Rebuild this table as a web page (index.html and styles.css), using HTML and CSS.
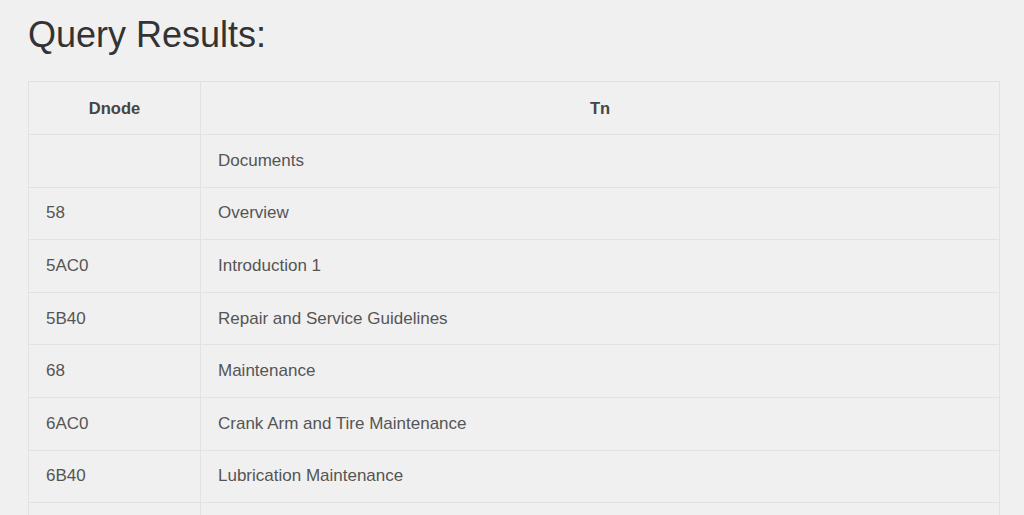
FILE: index.html
```html
<!DOCTYPE html>
<html>
<head>
<meta charset="utf-8">
<link rel="stylesheet" href="styles.css">
</head>
<body>
<div class="page">
  <h1 class="title">Query Results:</h1>
  <table class="results">
    <thead>
      <tr><th class="c1">Dnode</th><th>Tn</th></tr>
    </thead>
    <tbody>
      <tr><td></td><td>Documents</td></tr>
      <tr><td>58</td><td>Overview</td></tr>
      <tr><td>5AC0</td><td>Introduction 1</td></tr>
      <tr><td>5B40</td><td>Repair and Service Guidelines</td></tr>
      <tr><td>68</td><td>Maintenance</td></tr>
      <tr><td>6AC0</td><td>Crank Arm and Tire Maintenance</td></tr>
      <tr><td>6B40</td><td>Lubrication Maintenance</td></tr>
      <tr><td></td><td></td></tr>
    </tbody>
  </table>
</div>
</body>
</html>
```
FILE: styles.css
```css
html, body {
  margin: 0;
  padding: 0;
  background: #f0f0f0;
  font-family: "Liberation Sans", Arial, sans-serif;
}
.page {
  padding: 14.5px 24px 0 28px;
}
.title {
  margin: 0 0 26.5px 0;
  font-size: 36px;
  line-height: 40px;
  font-weight: normal;
  color: #333;
}
.results {
  width: 972px;
  border-collapse: collapse;
  font-size: 17px;
  color: #555;
}
.results th, .results td {
  border: 1px solid #e2e2e2;
  padding: 13.8px 17px;
  line-height: 24px;
  height: 24px;
  text-align: left;
}
.results th {
  text-align: center;
  font-weight: bold;
  font-size: 16.5px;
  color: #444;
  padding-top: 14px;
  padding-bottom: 14px;
}
.results .c1 {
  width: 137px;
}
```
